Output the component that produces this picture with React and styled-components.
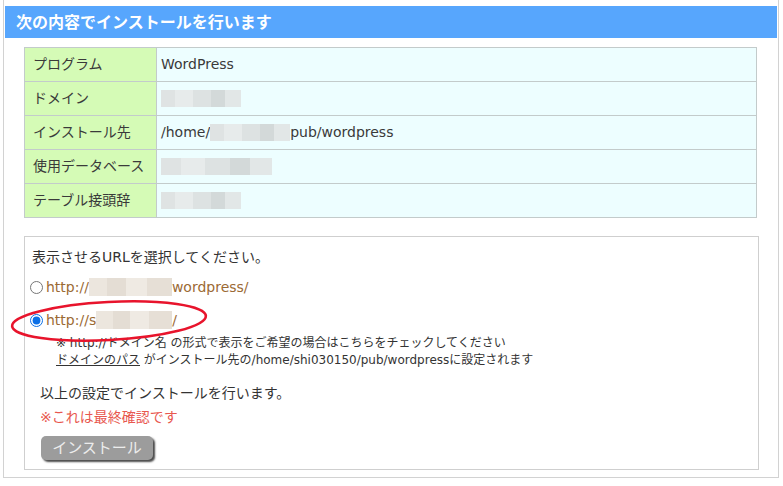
import React from "react";
import styled, { createGlobalStyle } from "styled-components";

const FONT = `"DejaVu Sans", "Noto Sans CJK JP", sans-serif`;

const Global = createGlobalStyle`
  html, body { margin: 0; padding: 0; background: #ffffff; }
  body {
    font-family: ${FONT};
    color: #333333;
  }
`;

const Panel = styled.div`
  margin-left: 3px;
  width: 772px;
  padding: 6px 1px 7px 1px;
  border: 1px solid #d2d2d2;
  border-top: none;
  box-sizing: content-box;
`;

const Header = styled.h2`
  margin: 0;
  height: 32px;
  background: #57a6fd;
  color: #ffffff;
  font-family: "Noto Sans CJK JP", sans-serif;
  font-size: 16px;
  font-weight: 700;
  line-height: 30px;
  padding-left: 11px;
  box-sizing: border-box;
  padding-bottom: 2px;
`;

const InfoTable = styled.table`
  margin: 9px 0 0 19px;
  width: 733px;
  border-collapse: collapse;
  font-size: 14px;
`;

const Row = styled.tr`
  height: 34px;
`;

const Label = styled.td`
  width: 123px;
  padding: 0 0 2px 8px;
  background: #d5fbb6;
  border: 1px solid #c3cbcb;
  color: #3a3a3a;
  line-height: 20px;
`;

const Value = styled.td`
  padding: 0 0 2px 4px;
  background: #edfeff;
  border: 1px solid #c3cbcb;
  color: #3a3a3a;
  line-height: 20px;
`;

const Redact = styled.span`
  display: inline-block;
  vertical-align: middle;
  width: ${(p) => p.$w}px;
  height: ${(p) => p.$h || 17}px;
  background: ${(p) =>
    p.$warm
      ? "linear-gradient(90deg, #ece6de 0 22%, #e4ddd4 22% 45%, #efeae3 45% 70%, #e6dfd6 70% 100%)"
      : "linear-gradient(90deg, #dfe3e3 0 18%, #e7ebeb 18% 40%, #dde2e2 40% 62%, #d3d9d9 62% 80%, #e2e7e7 80% 100%)"};
  margin-top: -1px;
`;

const SelectBox = styled.div`
  position: relative;
  margin: 18px 0 0 19px;
  width: 735px;
  border: 1px solid #cfcfcf;
  padding: 10px 0 9px 7px;
  box-sizing: border-box;
  font-size: 14px;
`;

const Prompt = styled.p`
  margin: 0;
  line-height: 20px;
  color: #333333;
`;

const RadioRow = styled.label`
  display: flex;
  align-items: center;
  height: 20px;
  margin-top: ${(p) => p.$top}px;
  margin-left: -2px;
  color: #9b6a34;
  cursor: pointer;
`;

const Radio = styled.input.attrs({ type: "radio", name: "url" })`
  width: 13px;
  height: 13px;
  margin: 1px 3px 0 0;
  accent-color: #0b6fe6;
`;

const Notes = styled.div`
  margin: 5px 0 0 24px;
  font-size: 12px;
  line-height: 17px;
  color: #333333;
`;

const Underlined = styled.span`
  text-decoration: underline;
`;

const Message = styled.p`
  margin: ${(p) => p.$top}px 0 0 8px;
  line-height: 20px;
  color: ${(p) => (p.$alert ? "#e8584f" : "#333333")};
`;

const InstallButton = styled.button`
  display: block;
  margin: 9px 0 0 9px;
  width: 112px;
  height: 24px;
  padding: 0 0 2px 0;
  border: none;
  border-radius: 5px;
  background: #9c9c9c;
  color: #ececec;
  font-family: "Noto Sans CJK JP", sans-serif;
  font-size: 15px;
  line-height: 22px;
  box-shadow: 2px 2px 2px #4a4a4a;
`;

const Annotation = styled.svg`
  position: absolute;
  left: -16px;
  top: 61px;
  width: 200px;
  height: 46px;
  pointer-events: none;
  overflow: visible;
`;

export default function App() {
  return (
    <>
      <Global />
      <Panel>
        <Header>次の内容でインストールを行います</Header>
        <InfoTable>
          <tbody>
            <Row>
              <Label>プログラム</Label>
              <Value>WordPress</Value>
            </Row>
            <Row>
              <Label>ドメイン</Label>
              <Value>
                <Redact $w={80} />
              </Value>
            </Row>
            <Row>
              <Label>インストール先</Label>
              <Value>
                /home/
                <Redact $w={80} />
                pub/wordpress
              </Value>
            </Row>
            <Row>
              <Label>使用データベース</Label>
              <Value>
                <Redact $w={111} />
              </Value>
            </Row>
            <Row>
              <Label>テーブル接頭辞</Label>
              <Value>
                <Redact $w={80} />
              </Value>
            </Row>
          </tbody>
        </InfoTable>

        <SelectBox>
          <Prompt>表示させるURLを選択してください。</Prompt>
          <RadioRow $top={10}>
            <Radio />
            http://
            <Redact $w={83} $h={18} $warm />
            wordpress/
          </RadioRow>
          <RadioRow $top={13}>
            <Radio defaultChecked />
            http://s
            <Redact $w={76} $h={18} $warm />/
          </RadioRow>
          <Notes>
            <div>※ http://ドメイン名 の形式で表示をご希望の場合はこちらをチェックしてください</div>
            <div>
              <Underlined>ドメインのパス</Underlined> がインストール先の/home/shi030150/pub/wordpressに設定されます
            </div>
          </Notes>
          <Message $top={14}>以上の設定でインストールを行います。</Message>
          <Message $top={4} $alert>
            ※これは最終確認です
          </Message>
          <InstallButton>インストール</InstallButton>
          <Annotation viewBox="0 0 200 46">
            <ellipse
              cx="100"
              cy="23"
              rx="97"
              ry="19"
              fill="none"
              stroke="#e8142c"
              strokeWidth="2.6"
              transform="rotate(-3 100 23)"
            />
          </Annotation>
        </SelectBox>
      </Panel>
    </>
  );
}
